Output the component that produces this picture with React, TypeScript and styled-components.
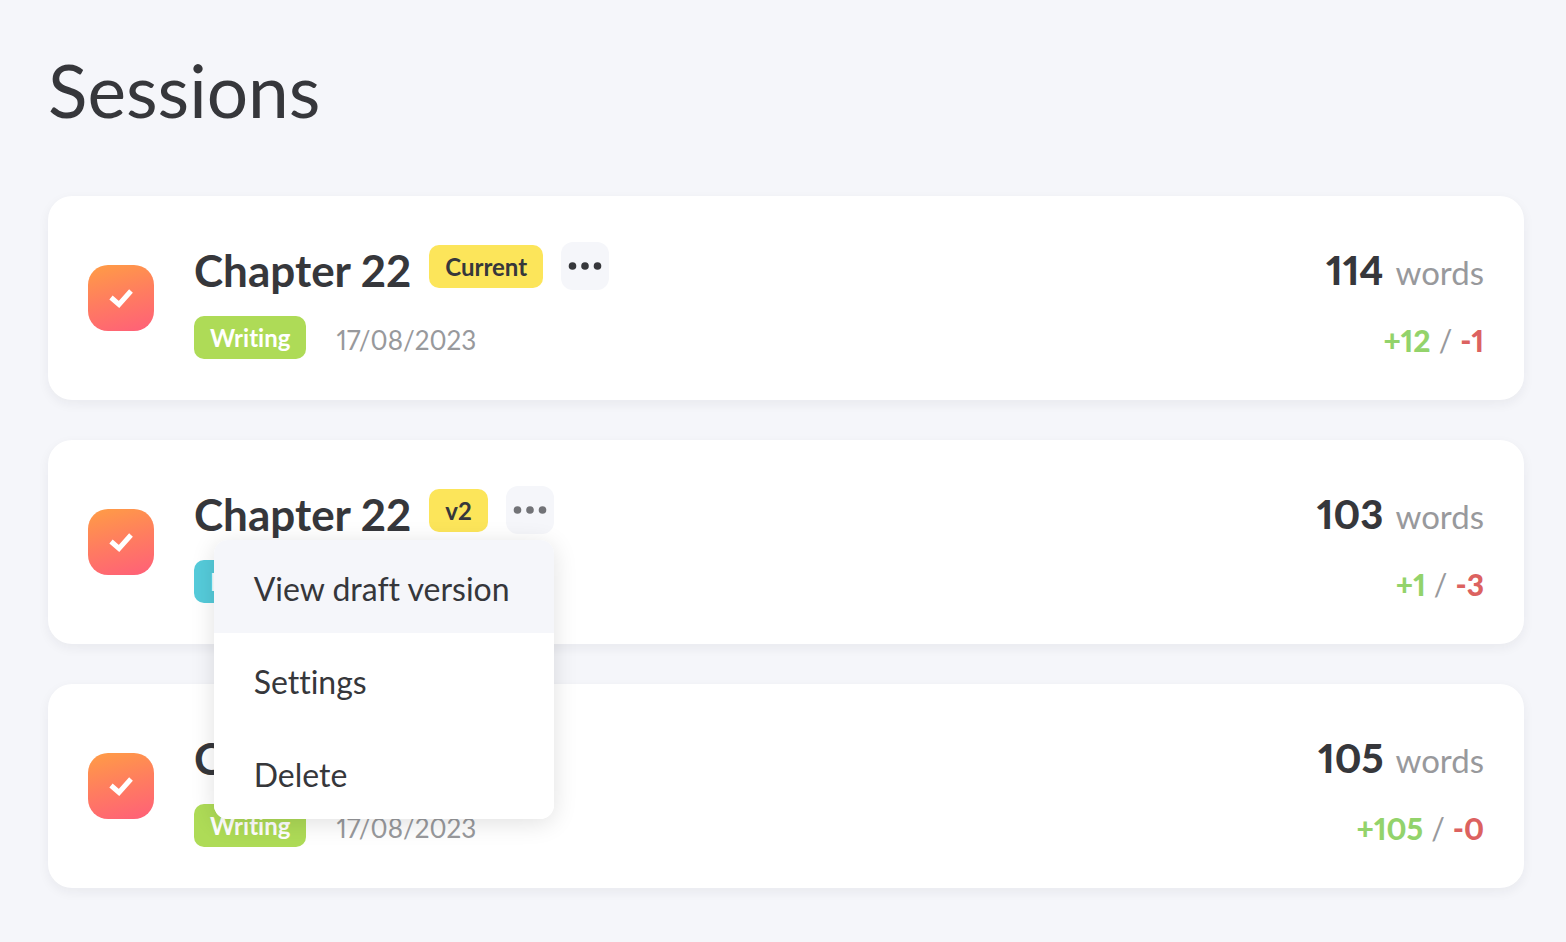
import React, { useState } from 'react';
import styled, { createGlobalStyle } from 'styled-components';

const GlobalStyle = createGlobalStyle`
  *, *::before, *::after { box-sizing: border-box; }
  body {
    margin: 0;
    background: #f5f6fa;
    color: #36373b;
    font-family: Lato, "Open Sans", sans-serif;
    font-variant-numeric: proportional-nums;
    font-variant-ligatures: none;
  }
  button { font: inherit; color: inherit; }
`;

const Page = styled.main`
  padding: 48px 42px 54px 48px;
`;

const Heading = styled.h1`
  margin: 0 0 64px;
  font-size: 73px;
  line-height: 84px;
  font-weight: 400;
`;

const SessionList = styled.ul`
  display: flex;
  flex-direction: column;
  gap: 40px;
  margin: 0;
  padding: 0;
  list-style: none;
`;

const Card = styled.li`
  display: flex;
  align-items: center;
  gap: 40px;
  padding: 40px;
  border-radius: 24px;
  background: #fff;
  box-shadow: 0 4px 12px rgba(40, 40, 50, 0.06);
`;

const Tick = styled.label`
  display: grid;
  flex: none;
  place-items: center;
  width: 66px;
  height: 66px;

  > * { grid-area: 1 / 1; }
  svg { pointer-events: none; z-index: 0; }
`;

const TickInput = styled.input`
  appearance: none;
  width: 66px;
  height: 66px;
  margin: 0;
  border-radius: 20px;
  background: linear-gradient(165deg, #ff9d45 0%, #ff7c60 50%, #ff5f79 100%);
`;

const Details = styled.div`
  display: flex;
  flex: 1;
  flex-direction: column;
  gap: 20px;
`;

const TitleRow = styled.div`
  display: flex;
  align-items: center;
  gap: 18px;
  height: 60px;
`;

const Title = styled.h2`
  margin: 0;
  padding-top: 8px;
  font-size: 44px;
  line-height: 60px;
  font-weight: 700;
`;

const MetaRow = styled.div`
  display: flex;
  align-items: flex-start;
  gap: 30px;
  height: 44px;
`;

const tones = {
  yellow: { background: '#fce55a', color: '#36373b' },
  green: { background: '#aedb57', color: '#fff' },
  teal: { background: '#55cbda', color: '#fff' },
};

const Badge = styled.span<{ $tone: keyof typeof tones }>`
  padding: 0 16px;
  border-radius: 10px;
  background: ${(p) => tones[p.$tone].background};
  color: ${(p) => tones[p.$tone].color};
  font-size: 24px;
  line-height: 43px;
  font-weight: 700;
`;

const SessionDate = styled.time`
  color: #98999c;
  font-size: 26px;
  line-height: 48px;
`;

const MenuAnchor = styled.div`
  position: relative;
  height: 48px;
`;

const MoreButton = styled.button<{ $open: boolean }>`
  display: grid;
  place-items: center;
  width: 48px;
  height: 48px;
  padding: 0;
  border: 0;
  border-radius: 12px;
  background: #f5f6fa;
  color: ${(p) => (p.$open ? '#727377' : '#36373b')};
  cursor: pointer;
`;

const Menu = styled.div`
  position: absolute;
  z-index: 2;
  top: calc(100% + 6px);
  right: 0;
  width: 340px;
  overflow: hidden;
  border-radius: 14px;
  background: #fff;
  box-shadow: 0 4px 24px rgba(0, 0, 0, 0.12);
`;

const MenuItem = styled.button<{ $active: boolean }>`
  display: block;
  width: 100%;
  padding: 4px 40px 0;
  border: 0;
  background: ${(p) => (p.$active ? '#f5f6fa' : '#fff')};
  font-size: 32px;
  line-height: 89px;
  text-align: left;
  white-space: nowrap;
  cursor: pointer;
`;

const Stats = styled.div`
  display: flex;
  flex-direction: column;
  align-items: flex-end;
  gap: 20px;
  color: #98999c;
`;

const WordCount = styled.p`
  display: flex;
  align-items: baseline;
  gap: 12px;
  height: 60px;
  margin: 0;
  padding-top: 4px;
  font-size: 33px;
  line-height: 60px;

  strong {
    color: #36373b;
    font-size: 40px;
    font-weight: 900;
  }
`;

const Changes = styled.p`
  display: flex;
  gap: 8px;
  height: 44px;
  margin: 0;
  font-size: 30px;
  line-height: 48px;
`;

const Delta = styled.strong<{ $kind: 'added' | 'removed' }>`
  color: ${(p) => (p.$kind === 'added' ? '#93d36b' : '#dc6260')};
  font-weight: 900;
`;

type Session = {
  id: number;
  version: string;
  stage: string;
  tone: keyof typeof tones;
  words: number;
  added: number;
  removed: number;
};

const sessions: Session[] = [
  { id: 1, version: 'Current', stage: 'Writing', tone: 'green', words: 114, added: 12, removed: 1 },
  { id: 2, version: 'v2', stage: 'Editing', tone: 'teal', words: 103, added: 1, removed: 3 },
  { id: 3, version: 'v1', stage: 'Writing', tone: 'green', words: 105, added: 105, removed: 0 },
];

const actions = ['View draft version', 'Settings', 'Delete'];

export default function App() {
  const [openId, setOpenId] = useState<number | null>(2);
  const [active, setActive] = useState(0);

  return (
    <>
      <GlobalStyle />
      <Page>
        <Heading>Sessions</Heading>
        <SessionList>
          {sessions.map((s) => (
            <Card key={s.id}>
              <Tick>
                <TickInput type="checkbox" defaultChecked aria-label="Session complete" />
                <svg width="24" height="20" viewBox="0 0 24 20" fill="none" aria-hidden="true">
                  <path d="M2 9.5 10 16.5 22 3" stroke="#fff" strokeWidth="5" />
                </svg>
              </Tick>
              <Details>
                <TitleRow>
                  <Title>Chapter 22</Title>
                  <Badge $tone="yellow">{s.version}</Badge>
                  <MenuAnchor>
                    <MoreButton
                      type="button"
                      $open={openId === s.id}
                      aria-label="Session options"
                      aria-expanded={openId === s.id}
                      onClick={() => setOpenId(openId === s.id ? null : s.id)}
                    >
                      <svg width="34" height="8" viewBox="0 0 34 8" fill="currentColor" aria-hidden="true">
                        <circle cx="4.5" cy="4" r="3.8" />
                        <circle cx="17" cy="4" r="3.8" />
                        <circle cx="29.5" cy="4" r="3.8" />
                      </svg>
                    </MoreButton>
                    {openId === s.id && (
                      <Menu role="menu">
                        {actions.map((label, i) => (
                          <MenuItem
                            key={label}
                            type="button"
                            role="menuitem"
                            $active={active === i}
                            onMouseEnter={() => setActive(i)}
                          >
                            {label}
                          </MenuItem>
                        ))}
                      </Menu>
                    )}
                  </MenuAnchor>
                </TitleRow>
                <MetaRow>
                  <Badge $tone={s.tone}>{s.stage}</Badge>
                  <SessionDate dateTime="2023-08-17">17/08/2023</SessionDate>
                </MetaRow>
              </Details>
              <Stats>
                <WordCount>
                  <strong>{s.words}</strong>
                  <span>words</span>
                </WordCount>
                <Changes>
                  <Delta $kind="added">+{s.added}</Delta>
                  <span>/</span>
                  <Delta $kind="removed">-{s.removed}</Delta>
                </Changes>
              </Stats>
            </Card>
          ))}
        </SessionList>
      </Page>
    </>
  );
}
